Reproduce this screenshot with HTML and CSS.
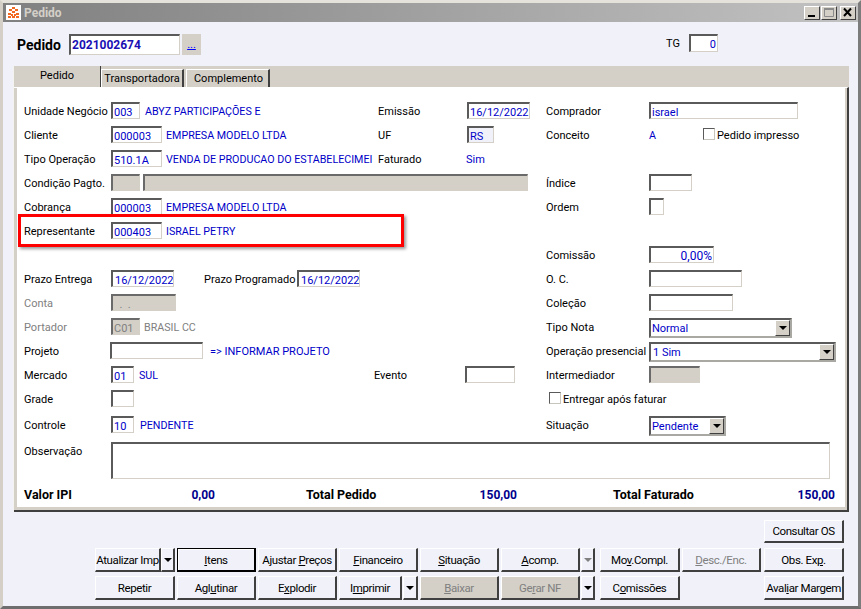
FILE: index.html
```html
<!DOCTYPE html>
<html lang="pt">
<head>
<meta charset="utf-8">
<title>Pedido</title>
<link rel="stylesheet" href="styles.css">
</head>
<body>
<div class="window">
  <div class="titlebar">
    <svg class="appicon" width="15" height="15" viewBox="0 0 15 15">
      <rect width="15" height="15" fill="#fff"/>
      <path d="M6 2h3v2H6zM3 4h3v2H3zM9 4h3v2H9zM6 6h3v2H6zM2 8h3v2H2zM10 8h3v2h-3zM5 9h2v2H5zM8 9h2v2H8zM2 11h3v2H2zM10 11h3v2h-3zM6 11h3v2H6z" fill="#f26a21"/>
    </svg>
    <span class="title">Pedido</span>
    <div class="winbtns">
      <div class="winbtn"><svg width="15" height="13" viewBox="0 0 15 13"><rect x="4" y="9" width="7" height="2" fill="#000"/></svg></div>
      <div class="winbtn"><svg width="15" height="13" viewBox="0 0 15 13"><path d="M3.5 2.5h9v8h-9z" fill="none" stroke="#8a8a8a"/><path d="M3 2h10v2H3z" fill="#8a8a8a"/></svg></div>
      <div class="winbtn close"><svg width="15" height="13" viewBox="0 0 15 13"><path d="M4 2.5l7 7.5M11 2.5L4 10" fill="none" stroke="#000" stroke-width="2"/></svg></div>
    </div>
  </div>

  <div class="content">
    <div class="header">
      <span class="pedido-label">Pedido</span>
      <div class="field pedido-no">2021002674</div>
      <div class="dots"><a>...</a></div>
      <span class="tg-label">TG</span>
      <div class="field tg right">0</div>
    </div>

    <div class="tabcontrol">
      <div class="tabstrip">
        <div class="tab active">Pedido</div>
        <div class="tab t-transp">Transportadora</div>
        <div class="tab t-compl">Complemento</div>
      </div>
      <div class="panel">
        <div class="highlight"></div>

        <div class="row">
          <div class="c1"><span class="lb">Unidade Negócio</span><div class="field w29">003</div><span class="val ml5">ABYZ PARTICIPAÇÕES E</span></div>
          <div class="c2"><span class="lb2">Emissão</span><div class="field w63">16/12/2022</div></div>
          <div class="c3"><span class="lb3">Comprador</span><div class="field w149">israel</div></div>
        </div>
        <div class="row">
          <div class="c1"><span class="lb">Cliente</span><div class="field w51">000003</div><span class="val ml4">EMPRESA MODELO LTDA</span></div>
          <div class="c2"><span class="lb2">UF</span><div class="field w27 tint">RS</div></div>
          <div class="c3"><span class="lb3">Conceito</span><span class="val w54">A</span><span class="check"></span><span class="ck-text">Pedido impresso</span></div>
        </div>
        <div class="row">
          <div class="c1"><span class="lb">Tipo Operação</span><div class="field w51">510.1A</div><span class="val ml4">VENDA DE PRODUCAO DO ESTABELECIMEI</span></div>
          <div class="c2"><span class="lb2">Faturado</span><span class="val sim">Sim</span></div>
          <div class="c3"></div>
        </div>
        <div class="row">
          <div class="c12"><span class="lb">Condição Pagto.</span><div class="field w29 off"></div><div class="field w385 off ml3"></div></div>
          <div class="c3"><span class="lb3">Índice</span><div class="field w43"></div></div>
        </div>
        <div class="row">
          <div class="c1"><span class="lb">Cobrança</span><div class="field w51">000003</div><span class="val ml4">EMPRESA MODELO LTDA</span></div>
          <div class="c2"></div>
          <div class="c3"><span class="lb3">Ordem</span><div class="field w15"></div></div>
        </div>
        <div class="row">
          <div class="c1"><span class="lb">Representante</span><div class="field w51">000403</div><span class="val ml4">ISRAEL PETRY</span></div>
          <div class="c2"></div>
          <div class="c3"></div>
        </div>
        <div class="row">
          <div class="c1"></div>
          <div class="c2"></div>
          <div class="c3"><span class="lb3">Comissão</span><div class="field w65 right pct">0,00%</div></div>
        </div>
        <div class="row">
          <div class="c1"><span class="lb">Prazo Entrega</span><div class="field w63 date">16/12/2022</div><span class="lb-prog">Prazo Programado</span><div class="field w63 date">16/12/2022</div></div>
          <div class="c2"></div>
          <div class="c3"><span class="lb3">O. C.</span><div class="field w93"></div></div>
        </div>
        <div class="row">
          <div class="c1"><span class="lb muted">Conta</span><div class="field w65 off muted-v">&nbsp;&nbsp;.&nbsp;&nbsp;.</div></div>
          <div class="c2"></div>
          <div class="c3"><span class="lb3">Coleção</span><div class="field w84"></div></div>
        </div>
        <div class="row">
          <div class="c1"><span class="lb muted">Portador</span><div class="field w29 off muted-v">C01</div><span class="val ml4 muted">BRASIL CC</span></div>
          <div class="c2"></div>
          <div class="c3"><span class="lb3">Tipo Nota</span><div class="combo w143"><span>Normal</span><i class="arrowbtn"><b></b></i></div></div>
        </div>
        <div class="row">
          <div class="c1"><span class="lb lb-short">Projeto</span><div class="field w93"></div><span class="val val-lg ml7">=&gt; INFORMAR PROJETO</span></div>
          <div class="c2"></div>
          <div class="c3"><span class="lb3">Operação presencial</span><div class="combo w187 pad"><span>1 Sim</span><i class="arrowbtn"><b></b></i></div></div>
        </div>
        <div class="row">
          <div class="c1"><span class="lb">Mercado</span><div class="field w23">01</div><span class="val ml5">SUL</span></div>
          <div class="c2 tight"><span class="lb-ev">Evento</span><div class="field w50"></div></div>
          <div class="c3"><span class="lb3">Intermediador</span><div class="field w51 off"></div></div>
        </div>
        <div class="row tall">
          <div class="c1"><span class="lb">Grade</span><div class="field w23"></div></div>
          <div class="c2"></div>
          <div class="c3 ck-row"><span class="check"></span><span class="ck-text">Entregar após faturar</span></div>
        </div>
        <div class="row tall">
          <div class="c1"><span class="lb">Controle</span><div class="field w23">10</div><span class="val ml6">PENDENTE</span></div>
          <div class="c2"></div>
          <div class="c3"><span class="lb3">Situação</span><div class="combo w77"><span>Pendente</span><i class="arrowbtn"><b></b></i></div></div>
        </div>
        <div class="obs">
          <span class="lb">Observação</span>
          <div class="field w719 obs-box"></div>
        </div>
        <div class="totals">
          <span class="t-label">Valor IPI</span>
          <span class="t-val">0,00</span>
          <span class="t-label t2">Total Pedido</span>
          <span class="t-val">150,00</span>
          <span class="t-label t3">Total Faturado</span>
          <span class="t-val">150,00</span>
        </div>
      </div>
    </div>

    <div class="toolbar">
      <div class="btnrow first">
        <button class="btn w80">Consultar OS</button>
      </div>
      <div class="btnrow second">
        <button class="btn w66">Atualizar Imp</button><button class="btn drop"><b></b></button>
        <button class="btn w79 default"><u>I</u>tens</button>
        <button class="btn w79">Ajustar <u>P</u>reços</button>
        <button class="btn w79"><u>F</u>inanceiro</button>
        <button class="btn w79"><u>S</u>ituação</button>
        <button class="btn w79"><u>A</u>comp.</button><button class="btn drop sep1 dis"><b></b></button>
        <button class="btn w80 sep5">Mo<u>v</u>.Compl.</button>
        <button class="btn w79 dis"><u>D</u>esc./Enc.</button>
        <button class="btn w80 sep3">Obs. Ex<u>p</u>.</button>
      </div>
      <div class="btnrow">
        <button class="btn w80">Repetir</button>
        <button class="btn w79">Agl<u>u</u>tinar</button>
        <button class="btn w79">E<u>x</u>plodir</button>
        <button class="btn w63">I<u>m</u>primir</button><button class="btn drop d15 sep1"><b></b></button>
        <button class="btn w79 flat dis"><u>B</u>aixar</button>
        <button class="btn w79 flat dis">Ge<u>r</u>ar NF</button><button class="btn drop sep1"><b></b></button>
        <button class="btn w80 sep5">C<u>o</u>missões</button>
        <span class="spacer"></span>
        <button class="btn w80">Aval<u>i</u>ar Margem</button>
      </div>
    </div>
  </div>
</div>
</body>
</html>
```

FILE: styles.css
```css
* { box-sizing: border-box; }
html, body { margin: 0; padding: 0; }
body {
  width: 861px;
  height: 609px;
  overflow: hidden;
  font-family: Roboto, "Liberation Sans", Arial, sans-serif;
  font-size: 11px;
  color: #000;
}
.window {
  width: 861px;
  height: 609px;
  display: flex;
  flex-direction: column;
  background: #f1f2f9;
  border-style: solid;
  border-width: 3px;
  border-color: #e4e2da #7c7c7c #6e6e6e #d4d0c8;
}
.titlebar {
  height: 19px;
  flex: none;
  display: flex;
  align-items: center;
  padding: 0 2px 0 3px;
  background: linear-gradient(90deg, #808080, #c2c2c2);
}
.appicon { flex: none; }
.title {
  margin-left: 3px;
  font-size: 12px;
  font-weight: bold;
  color: #d4d0c8;
}
.winbtns { margin-left: auto; display: flex; gap: 1px; }
.winbtn {
  width: 16px;
  height: 14px;
  display: flex;
  background: #d4d0c8;
  border-style: solid;
  border-width: 1px;
  border-color: #fff #404040 #404040 #fff;
  overflow: hidden;
}
.winbtn svg { flex: none; margin: -1px 0 0 -1px; }
.close { margin-left: 2px; }

.content { flex: 1; display: flex; flex-direction: column; padding: 0 0 0 10px; }

.field {
  flex: none;
  height: 17px;
  background: #fff;
  color: #0000c8;
  font-size: 11px;
  line-height: 15px;
  padding: 1px 0 0 1px;
  overflow: hidden;
  white-space: nowrap;
  border-style: solid;
  border-width: 2px 1px 1px 2px;
  border-color: #5a5a5a #d4d0c8 #d4d0c8 #5a5a5a;
}
.right { text-align: right; padding: 1px 1px 0 0; }
.pct { font-size: 12px; }
.date { padding-left: 2px; }
.tint { background: #f1f2f9; }
.off { background: #d4d0c8; border-color: #6a6a6a #d4d0c8 #d4d0c8 #6a6a6a; }
.muted-v { color: #808080; }

.header {
  height: 44px;
  flex: none;
  display: flex;
  align-items: flex-start;
  padding: 12px 0 0 4px;
}
.pedido-label { font-size: 14px; font-weight: bold; width: 52px; line-height: 22px; }
.pedido-no {
  width: 111px;
  height: 21px;
  padding-left: 1px;
  font-size: 12px;
  font-weight: bold;
  color: #1a0fb4;
  line-height: 16px;
}
.dots {
  width: 19px;
  height: 21px;
  margin-left: 2px;
  background: #d4d0c8;
  text-align: center;
  line-height: 21px;
}
.dots a { color: #00f; text-decoration: underline; font-size: 11px; }
.tg-label { margin-left: 465px; width: 23px; line-height: 19px; }
.tg { width: 29px; height: 18px; }

.w15 { width: 15px; } .w23 { width: 23px; } .w27 { width: 27px; }
.w29 { width: 29px; } .w43 { width: 43px; } .w50 { width: 50px; }
.w51 { width: 51px; } .w63 { width: 63px; } .w65 { width: 65px; }
.w84 { width: 84px; } .w93 { width: 93px; } .w149 { width: 149px; }
.w385 { width: 385px; } .w719 { width: 719px; }
.w66 { width: 66px; } .w79 { width: 79px; } .w80 { width: 80px; }
.w143 { width: 143px; } .w187 { width: 187px; } .w77 { width: 77px; }

.ml3 { margin-left: 3px; } .ml4 { margin-left: 4px; } .ml5 { margin-left: 5px; }
.ml6 { margin-left: 6px; } .ml7 { margin-left: 7px; }

.tabcontrol {
  width: 836px;
  flex: none;
  display: flex;
  flex-direction: column;
  background: #d4d0c8;
  border-left: 1px solid #f4f3ef;
}
.tabstrip {
  height: 21px;
  display: flex;
  align-items: flex-end;
  background: #d4d0c8;
}
.tab {
  height: 18px;
  width: 83px;
  padding-top: 2px;
  text-align: center;
  font-size: 11px;
  line-height: 14px;
  border-style: solid;
  border-width: 1px 2px 0 1px;
  border-color: #fff #404040 transparent #fff;
}
.tab.active {
  width: 87px;
  height: 21px;
  padding-top: 3px;
  border-width: 0 1px 0 0;
  border-color: transparent #404040 transparent transparent;
}
.t-compl { margin-left: 2px; width: 84px; padding-left: 2px; }

.panel {
  position: relative;
  height: 425px;
  padding: 14px 0 0 10px;
  background: #fff;
  border-style: solid;
  border-width: 1px 2px 2px 0;
  border-color: #fff #404040 #404040 transparent;
  box-shadow: inset -2px -3px 0 #d4d0c8, inset 3px 0 0 #d4d0c8;
}
.highlight {
  position: absolute;
  left: 4px;
  top: 126px;
  width: 386px;
  height: 33px;
  border: 3px solid #f00;
  box-shadow: 2px 2px 3px rgba(0, 0, 0, .4);
}

.row {
  display: grid;
  grid-template-columns: 350px 172px 1fr;
  height: 24px;
}
.row.tall { height: 26px; }
.c1, .c2, .c3, .c12 { display: flex; align-items: flex-start; min-width: 0; }
.c2 { padding-left: 4px; }
.c2.tight { padding-left: 0; }
.c12 { grid-column: span 2; }
.c1 > span, .c2 > span, .c3 > span, .c12 > span { line-height: 17px; padding-top: 1px; white-space: nowrap; }
.lb { width: 87px; flex: none; }
.lb-short { width: 86px; }
.lb2 { width: 89px; flex: none; }
.lb3 { width: 103px; flex: none; }
.lb-ev { width: 91px; flex: none; }
.lb-prog { width: 93px; margin-left: 30px; flex: none; }
.val { color: #0000c8; font-size: 10.7px; }
.val-lg { font-size: 11px; }
.sim { margin-left: -1px; font-size: 11px; }
.w54 { width: 54px; flex: none; }
.muted { color: #808080; }

.c3 > .check {
  width: 12px;
  height: 12px;
  flex: none;
  margin-top: 2px;
  padding: 0;
  background: #fff;
  border-style: solid;
  border-width: 1px;
  border-color: #5a5a5a #c8c5bd #c8c5bd #5a5a5a;
}
.ck-text { margin-left: 2px; }
.ck-row { padding-left: 3px; }

.combo {
  flex: none;
  height: 20px;
  display: flex;
  justify-content: space-between;
  background: #fff;
  color: #0000c8;
  font-size: 11px;
  line-height: 18px;
  padding-left: 1px;
  border-style: solid;
  border-width: 2px;
  border-color: #5a5a5a #aaa8a2 #aaa8a2 #5a5a5a;
}
.combo.pad { padding-left: 2px; }
.arrowbtn {
  width: 15px;
  height: 16px;
  position: relative;
  flex: none;
  display: block;
  background: #d4d0c8;
  border-style: solid;
  border-width: 1px;
  border-color: #fff #404040 #404040 #fff;
}
.arrowbtn b {
  position: absolute;
  left: 3px;
  top: 5px;
  border-style: solid;
  border-width: 4px 4px 0;
  border-color: #000 transparent transparent;
}

.obs { display: flex; height: 42px; }
.obs .lb { line-height: 17px; padding-top: 1px; }
.obs-box { height: 37px; }
.totals {
  display: grid;
  grid-template-columns: 146px 45px 245px 57px 246px 72px;
  padding-top: 4px;
  font-weight: bold;
  line-height: 14px;
  font-size: 12.5px;
}
.t-val { color: #00008c; text-align: right; font-size: 12px; }
.t2 { padding-left: 91px; }
.t3 { padding-left: 96px; }

.toolbar {
  flex: none;
  display: flex;
  flex-direction: column;
  padding: 8px 0 0 82px;
}
.btnrow { display: flex; gap: 2px; height: 24px; margin-bottom: 4px; }
.btnrow.first { justify-content: flex-end; height: 23px; margin-bottom: 5px; padding-right: 14px; }
.btn {
  flex: none;
  height: 100%;
  padding: 0;
  white-space: nowrap;
  font-family: Roboto, "Liberation Sans", Arial, sans-serif;
  font-size: 11.5px;
  letter-spacing: -.4px;
  color: #000;
  background: #f1f2f9;
  border-style: solid;
  border-width: 1px 2px 2px 1px;
  border-color: #fff #404040 #404040 #fff;
}
.drop { width: 14px; margin-left: -2px; position: relative; }
.drop.d15 { width: 15px; }
.drop b {
  position: absolute;
  left: 2px;
  top: 9px;
  border-style: solid;
  border-width: 4px 4px 0;
  border-color: #000 transparent transparent;
}
.drop.dis b { border-top-color: #808080; }
.sep1 { margin-left: -1px; }
.sep5 { margin-left: 3px; }
.sep3 { margin-left: 1px; }
.default { border-color: #000; box-shadow: inset 1px 1px 0 #fff; }
.dis { color: #808080; }
.flat { background: #d4d0c8; }
.spacer { width: 80px; flex: none; }
```
